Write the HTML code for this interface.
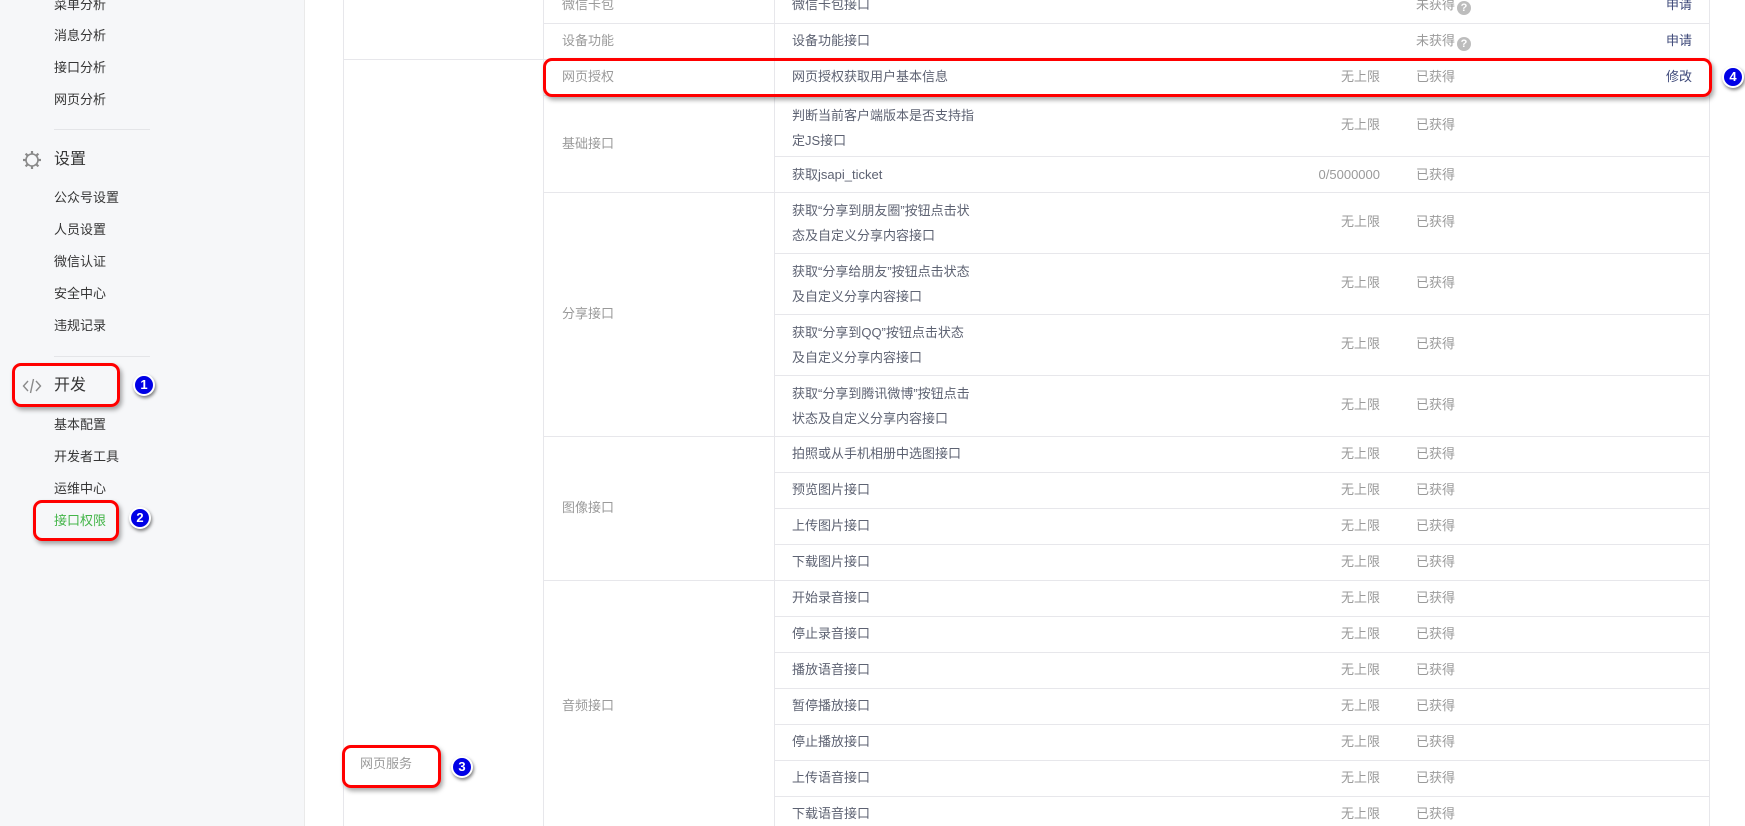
<!DOCTYPE html>
<html><head><meta charset="utf-8"><style>
*{margin:0;padding:0;box-sizing:border-box}
body{width:1745px;height:826px;overflow:hidden;background:#fff;font-family:"Liberation Sans","Noto Sans CJK SC",sans-serif;font-size:13px;position:relative}
.side{position:absolute;left:0;top:0;width:305px;height:826px;background:#f6f7f9;border-right:1px solid #eaeaea}
.mi{position:absolute;left:54px;color:#353535;line-height:20px;font-size:13px}
.hd{position:absolute;left:54px;color:#353535;font-size:16px;line-height:22px}
.sep{position:absolute;left:54px;width:96px;height:1px;background:#e4e5e8}
.a{position:absolute}
.vl{position:absolute;width:1px;background:#e7e7eb}
.hl{position:absolute;height:1px;background:#e7e7eb}
.t{position:absolute;line-height:20px;color:#5d6272}
.g{position:absolute;line-height:20px;color:#9a9a9a}
.v{position:absolute;right:365px;text-align:right;line-height:20px;color:#9a9a9a}
.s{position:absolute;left:1416px;line-height:20px;color:#9a9a9a}
.ac{position:absolute;right:53px;line-height:20px;color:#3f4a7a}
.box{position:absolute;border:3px solid #f00;border-radius:9px;box-shadow:2px 3px 5px rgba(0,0,0,.35)}
.bd{position:absolute;width:22px;height:22px;border-radius:50%;background:#0000e6;border:2px solid #fff;box-shadow:1px 2px 3px rgba(0,0,0,.5);color:#fff;font-weight:bold;font-size:13px;text-align:center;line-height:18px}
.q{display:inline-block;width:14px;height:14px;border-radius:50%;background:#bdbdbd;color:#fff;font-size:11px;line-height:14px;text-align:center;vertical-align:-2px;margin-left:2px;font-weight:bold}
</style></head><body>
<div class="side">
<div class="mi" style="top:-5px">菜单分析</div>
<div class="mi" style="top:26px">消息分析</div>
<div class="mi" style="top:58px">接口分析</div>
<div class="mi" style="top:90px">网页分析</div>
<div class="sep" style="top:129px"></div>
<svg class="a" style="left:22px;top:150px" width="20" height="20" viewBox="0 0 20 20"><circle cx="10" cy="10" r="6" fill="none" stroke="#8a8a8a" stroke-width="1.6"/><g stroke="#8a8a8a" stroke-width="2.2"><line x1="10" y1="1" x2="10" y2="4"/><line x1="10" y1="16" x2="10" y2="19"/><line x1="1" y1="10" x2="4" y2="10"/><line x1="16" y1="10" x2="19" y2="10"/><line x1="3.6" y1="3.6" x2="5.7" y2="5.7"/><line x1="14.3" y1="14.3" x2="16.4" y2="16.4"/><line x1="3.6" y1="16.4" x2="5.7" y2="14.3"/><line x1="14.3" y1="5.7" x2="16.4" y2="3.6"/></g></svg>
<div class="hd" style="top:149px">设置</div>
<div class="mi" style="top:188px">公众号设置</div>
<div class="mi" style="top:220px">人员设置</div>
<div class="mi" style="top:252px">微信认证</div>
<div class="mi" style="top:284px">安全中心</div>
<div class="mi" style="top:316px">违规记录</div>
<div class="sep" style="top:356px"></div>
<svg class="a" style="left:22px;top:377px" width="20" height="18" viewBox="0 0 20 18"><path d="M6 4 L1.5 9 L6 14 M14 4 L18.5 9 L14 14 M11.5 2 L8.5 16" fill="none" stroke="#8a8a8a" stroke-width="1.4"/></svg>
<div class="hd" style="top:375px">开发</div>
<div class="mi" style="top:415px">基本配置</div>
<div class="mi" style="top:447px">开发者工具</div>
<div class="mi" style="top:479px">运维中心</div>
<div class="mi" style="top:511px;color:#44b549">接口权限</div>
</div>

<div class="vl" style="left:343px;top:0;height:826px"></div>
<div class="vl" style="left:543px;top:0;height:826px"></div>
<div class="vl" style="left:774px;top:0;height:826px"></div>
<div class="vl" style="left:1709px;top:0;height:826px"></div>
<div class="hl" style="left:343px;width:1366px;top:59px"></div>
<div class="hl" style="left:543px;width:1166px;top:23px"></div>
<div class="hl" style="left:543px;width:1166px;top:95px"></div>
<div class="hl" style="left:774px;width:935px;top:156px"></div>
<div class="hl" style="left:543px;width:1166px;top:192px"></div>
<div class="hl" style="left:774px;width:935px;top:253px"></div>
<div class="hl" style="left:774px;width:935px;top:314px"></div>
<div class="hl" style="left:774px;width:935px;top:375px"></div>
<div class="hl" style="left:543px;width:1166px;top:436px"></div>
<div class="hl" style="left:774px;width:935px;top:472px"></div>
<div class="hl" style="left:774px;width:935px;top:508px"></div>
<div class="hl" style="left:774px;width:935px;top:544px"></div>
<div class="hl" style="left:543px;width:1166px;top:580px"></div>
<div class="hl" style="left:774px;width:935px;top:616px"></div>
<div class="hl" style="left:774px;width:935px;top:652px"></div>
<div class="hl" style="left:774px;width:935px;top:688px"></div>
<div class="hl" style="left:774px;width:935px;top:724px"></div>
<div class="hl" style="left:774px;width:935px;top:760px"></div>
<div class="hl" style="left:774px;width:935px;top:796px"></div>

<div class="g" style="left:360px;top:754px">网页服务</div>
<div class="g" style="left:562px;top:-5px">微信卡包</div>
<div class="g" style="left:562px;top:31px">设备功能</div>
<div class="g" style="left:562px;top:67px">网页授权</div>
<div class="g" style="left:562px;top:134px">基础接口</div>
<div class="g" style="left:562px;top:304px">分享接口</div>
<div class="g" style="left:562px;top:498px">图像接口</div>
<div class="g" style="left:562px;top:696px">音频接口</div>

<div class="t" style="left:792px;top:-5px">微信卡包接口</div><div class="s" style="top:-5px">未获得<span class="q">?</span></div><div class="ac" style="top:-5px">申请</div>
<div class="t" style="left:792px;top:31px">设备功能接口</div><div class="s" style="top:31px">未获得<span class="q">?</span></div><div class="ac" style="top:31px">申请</div>
<div class="t" style="left:792px;top:67px">网页授权获取用户基本信息</div><div class="v" style="top:67px">无上限</div><div class="s" style="top:67px">已获得</div><div class="ac" style="top:67px">修改</div>
<div class="t" style="left:792px;top:103px;line-height:25px">判断当前客户端版本是否支持指<br>定JS接口</div><div class="v" style="top:115px">无上限</div><div class="s" style="top:115px">已获得</div>
<div class="t" style="left:792px;top:165px">获取jsapi_ticket</div><div class="v" style="top:165px">0/5000000</div><div class="s" style="top:165px">已获得</div>
<div class="t" style="left:792px;top:198px;line-height:25px">获取“分享到朋友圈”按钮点击状<br>态及自定义分享内容接口</div><div class="v" style="top:212px">无上限</div><div class="s" style="top:212px">已获得</div>
<div class="t" style="left:792px;top:259px;line-height:25px">获取“分享给朋友”按钮点击状态<br>及自定义分享内容接口</div><div class="v" style="top:273px">无上限</div><div class="s" style="top:273px">已获得</div>
<div class="t" style="left:792px;top:320px;line-height:25px">获取“分享到QQ”按钮点击状态<br>及自定义分享内容接口</div><div class="v" style="top:334px">无上限</div><div class="s" style="top:334px">已获得</div>
<div class="t" style="left:792px;top:381px;line-height:25px">获取“分享到腾讯微博”按钮点击<br>状态及自定义分享内容接口</div><div class="v" style="top:395px">无上限</div><div class="s" style="top:395px">已获得</div>
<div class="t" style="left:792px;top:444px">拍照或从手机相册中选图接口</div><div class="v" style="top:444px">无上限</div><div class="s" style="top:444px">已获得</div>
<div class="t" style="left:792px;top:480px">预览图片接口</div><div class="v" style="top:480px">无上限</div><div class="s" style="top:480px">已获得</div>
<div class="t" style="left:792px;top:516px">上传图片接口</div><div class="v" style="top:516px">无上限</div><div class="s" style="top:516px">已获得</div>
<div class="t" style="left:792px;top:552px">下载图片接口</div><div class="v" style="top:552px">无上限</div><div class="s" style="top:552px">已获得</div>
<div class="t" style="left:792px;top:588px">开始录音接口</div><div class="v" style="top:588px">无上限</div><div class="s" style="top:588px">已获得</div>
<div class="t" style="left:792px;top:624px">停止录音接口</div><div class="v" style="top:624px">无上限</div><div class="s" style="top:624px">已获得</div>
<div class="t" style="left:792px;top:660px">播放语音接口</div><div class="v" style="top:660px">无上限</div><div class="s" style="top:660px">已获得</div>
<div class="t" style="left:792px;top:696px">暂停播放接口</div><div class="v" style="top:696px">无上限</div><div class="s" style="top:696px">已获得</div>
<div class="t" style="left:792px;top:732px">停止播放接口</div><div class="v" style="top:732px">无上限</div><div class="s" style="top:732px">已获得</div>
<div class="t" style="left:792px;top:768px">上传语音接口</div><div class="v" style="top:768px">无上限</div><div class="s" style="top:768px">已获得</div>
<div class="t" style="left:792px;top:804px">下载语音接口</div><div class="v" style="top:804px">无上限</div><div class="s" style="top:804px">已获得</div>

<div class="box" style="left:12px;top:363px;width:108px;height:44px"></div>
<div class="bd" style="left:133px;top:374px">1</div>
<div class="box" style="left:33px;top:500px;width:86px;height:41px"></div>
<div class="bd" style="left:129px;top:507px">2</div>
<div class="box" style="left:342px;top:745px;width:99px;height:43px"></div>
<div class="bd" style="left:451px;top:756px">3</div>
<div class="box" style="left:543px;top:58px;width:1169px;height:39px"></div>
<div class="bd" style="left:1722px;top:66px">4</div>
</body></html>
